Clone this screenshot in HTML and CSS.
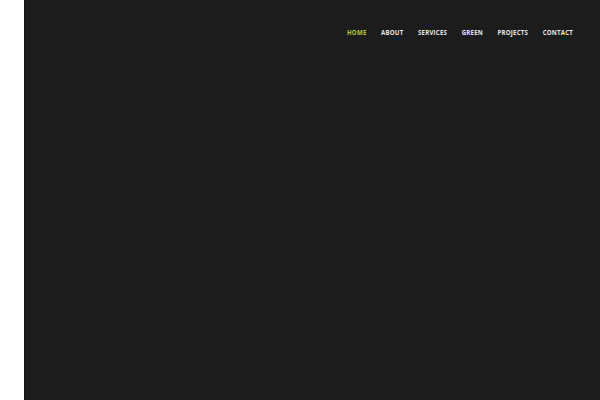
FILE: index.html
```html
<!DOCTYPE html>
<html>
<head>
<meta charset="utf-8">
<link rel="stylesheet" href="styles.css">
</head>
<body>
<div class="page">
  <div class="side"></div>
  <div class="main">
    <nav class="nav">
      <a class="item active">HOME</a>
      <a class="item">ABOUT</a>
      <a class="item">SERVICES</a>
      <a class="item">GREEN</a>
      <a class="item">PROJECTS</a>
      <a class="item">CONTACT</a>
    </nav>
  </div>
</div>
</body>
</html>
```
FILE: styles.css
```css
html, body { margin: 0; padding: 0; background: #fff; }
.page { display: flex; width: 600px; height: 400px; overflow: hidden; }
.side { width: 24px; flex: none; background: #fff; }
.main { flex: 1; background: #1c1c1c; border-left: 1px solid #151515; }
.nav {
  display: flex;
  justify-content: flex-end;
  gap: 14.5px;
  padding: 28px 27px 0 0;
  font-family: "Open Sans", sans-serif;
  font-weight: 700;
  font-size: 6.1px;
  letter-spacing: 0.22px;
  line-height: 9px;
}
.item { color: #e6e6e6; }
.item.active { color: #b8c43c; }
```
